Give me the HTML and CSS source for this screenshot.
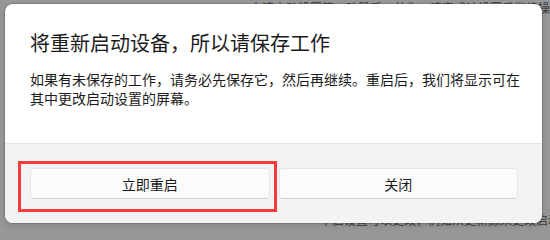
FILE: index.html
```html
<!DOCTYPE html>
<html lang="zh-CN">
<head>
<meta charset="utf-8">
<link rel="stylesheet" href="styles.css">
</head>
<body>
<div class="page">
  <div class="bg-line bg-top">申请启动设置第二阶段后，首先，请完成该设置后继续操作</div>
  <div class="bg-spacer"></div>
  <div class="bg-line bg-bottom">申启设置可以更改，例如从更新源来更改启动</div>
</div>
<div class="dialog">
  <div class="content">
    <h1 class="title">将重新启动设备，所以请保存工作</h1>
    <p class="desc">如果有未保存的工作，请务必先保存它，然后再继续。重启后，我们将显示可在其中更改启动设置的屏幕。</p>
  </div>
  <div class="footer">
    <button class="btn">立即重启</button>
    <button class="btn">关闭</button>
  </div>
</div>
<div class="highlight"></div>
</body>
</html>
```
FILE: styles.css
```css
* { box-sizing: border-box; }
html, body {
  margin: 0;
  padding: 0;
  width: 550px;
  height: 228px;
  overflow: hidden;
  background: #979797;
  font-family: "Noto Sans CJK SC", "Noto Sans", sans-serif;
}
.page {
  display: flex;
  flex-direction: column;
  height: 228px;
  color: #3a3a3a;
}
.bg-line {
  font-size: 12px;
  line-height: 16px;
  white-space: nowrap;
}
.bg-top { padding-left: 250px; }
.bg-spacer { flex: 1; }
.bg-bottom { padding-left: 320px; }

.dialog {
  position: absolute;
  left: 5px;
  top: 4px;
  width: 537px;
  height: 219px;
  background: #ffffff;
  border-radius: 8px;
  overflow: hidden;
  box-shadow: 0 0 0 1px rgba(0,0,0,0.12), 0 2px 6px rgba(0,0,0,0.15);
  display: flex;
  flex-direction: column;
}
.content {
  padding: 25px 24px 0 25px;
  height: 140px;
  border-bottom: 1px solid #e5e5e5;
  color: #1b1b1b;
}
.title {
  margin: 0;
  font-size: 20px;
  font-weight: 400;
  line-height: 28px;
}
.desc {
  margin: 13px 0 0 0;
  font-size: 14px;
  line-height: 19px;
  width: 496px;
}
.footer {
  flex: 1;
  background: #f3f3f3;
  padding: 24px 24px 0 25px;
  display: flex;
  gap: 9px;
}
.btn {
  width: 240px;
  height: 31px;
  background: #fbfbfb;
  border: 1px solid #e5e5e5;
  border-bottom-color: #d2d2d2;
  border-radius: 4px;
  font-family: inherit;
  font-size: 14px;
  color: #1b1b1b;
  padding: 0;
}
.highlight {
  position: absolute;
  left: 18px;
  top: 161px;
  width: 259px;
  height: 51px;
  border: 3px solid #f63b3b;
}
```
